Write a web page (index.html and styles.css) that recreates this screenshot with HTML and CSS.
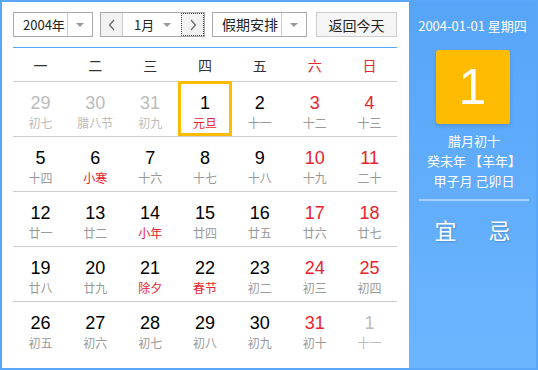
FILE: index.html
```html
<!DOCTYPE html>
<html>
<head>
    <title>万年历</title>
    <link rel="stylesheet" href="styles.css">
</head>
<body>
    <div class="cal">
        <div class="main">
            <div class="bar">
                <div class="sel sel-year">
                    <span class="sel-text">2004年</span>
                    <span class="sel-arrow"><i class="tri"></i></span>
                </div>
                <div class="month-group">
                    <span class="nav">
                        <svg width="8" height="12" viewBox="0 0 8 12"><polyline points="6,1 1.5,6 6,11" fill="none" stroke="#666" stroke-width="1.2"/></svg>
                    </span>
                    <span class="month-text">1月</span>
                    <span class="month-arrow"><i class="tri"></i></span>
                    <span class="nav nav-next">
                        <svg width="8" height="12" viewBox="0 0 8 12"><polyline points="2,1 6.5,6 2,11" fill="none" stroke="#666" stroke-width="1.2"/></svg>
                    </span>
                </div>
                <div class="sel sel-holiday">
                    <span class="sel-text">假期安排</span>
                    <span class="sel-arrow"><i class="tri"></i></span>
                </div>
                <button class="today-btn">返回今天</button>
            </div>

            <div class="week">
                <span>一</span><span>二</span><span>三</span><span>四</span><span>五</span>
                <span class="red">六</span><span class="red">日</span>
            </div>

            <div class="row">
                <div class="day other"><b>29</b><small>初七</small></div>
                <div class="day other"><b>30</b><small>腊八节</small></div>
                <div class="day other"><b>31</b><small>初九</small></div>
                <div class="day current"><b>1</b><small class="fest">元旦</small></div>
                <div class="day"><b>2</b><small>十一</small></div>
                <div class="day weekend"><b>3</b><small>十二</small></div>
                <div class="day weekend"><b>4</b><small>十三</small></div>
            </div>
            <div class="row">
                <div class="day"><b>5</b><small>十四</small></div>
                <div class="day"><b>6</b><small class="fest">小寒</small></div>
                <div class="day"><b>7</b><small>十六</small></div>
                <div class="day"><b>8</b><small>十七</small></div>
                <div class="day"><b>9</b><small>十八</small></div>
                <div class="day weekend"><b>10</b><small>十九</small></div>
                <div class="day weekend"><b>11</b><small>二十</small></div>
            </div>
            <div class="row">
                <div class="day"><b>12</b><small>廿一</small></div>
                <div class="day"><b>13</b><small>廿二</small></div>
                <div class="day"><b>14</b><small class="fest">小年</small></div>
                <div class="day"><b>15</b><small>廿四</small></div>
                <div class="day"><b>16</b><small>廿五</small></div>
                <div class="day weekend"><b>17</b><small>廿六</small></div>
                <div class="day weekend"><b>18</b><small>廿七</small></div>
            </div>
            <div class="row">
                <div class="day"><b>19</b><small>廿八</small></div>
                <div class="day"><b>20</b><small>廿九</small></div>
                <div class="day"><b>21</b><small class="fest">除夕</small></div>
                <div class="day"><b>22</b><small class="fest">春节</small></div>
                <div class="day"><b>23</b><small>初二</small></div>
                <div class="day weekend"><b>24</b><small>初三</small></div>
                <div class="day weekend"><b>25</b><small>初四</small></div>
            </div>
            <div class="row">
                <div class="day"><b>26</b><small>初五</small></div>
                <div class="day"><b>27</b><small>初六</small></div>
                <div class="day"><b>28</b><small>初七</small></div>
                <div class="day"><b>29</b><small>初八</small></div>
                <div class="day"><b>30</b><small>初九</small></div>
                <div class="day weekend"><b>31</b><small>初十</small></div>
                <div class="day other"><b>1</b><small>十一</small></div>
            </div>
        </div>

        <div class="side">
            <div class="side-date">2004-01-01 星期四</div>
            <div class="big-day">1</div>
            <div class="lunar">
                <p>腊月初十</p>
                <p>癸未年 【羊年】</p>
                <p>甲子月 己卯日</p>
            </div>
            <div class="yiji">
                <span>宜</span><span>忌</span>
            </div>
        </div>
    </div>
</body>
</html>
```

FILE: styles.css
```css
body { margin: 0; font-family: "Noto Sans CJK SC", sans-serif; }
.cal { display: flex; width: 534px; height: 366px; border: 2px solid #5aa6f8; background: #5aa6f8; }

/* calendar area */
.main { width: 384px; padding: 10px 12px 0 11px; background: #fff; }
.bar { display: flex; height: 25px; padding-bottom: 10px; border-bottom: 1px solid #5aa6f8; }
.sel { display: flex; box-sizing: border-box; height: 25px; border: 1px solid #aaa; font-size: 13px; color: #222; white-space: nowrap; }
.sel-year { width: 80px; }
.sel-holiday { width: 95px; margin-left: 7px; font-size: 14px; }
.sel-text { flex: 1; padding-left: 9px; line-height: 23px; }
.sel-arrow { width: 24px; flex: none; border-left: 1px solid #ccc; display: flex; align-items: center; justify-content: center; }
.tri { display: block; width: 0; height: 0; border-left: 4px solid transparent; border-right: 4px solid transparent; border-top: 4px solid #999; }

.month-group { display: flex; box-sizing: border-box; width: 105px; height: 25px; margin-left: 7px; border: 1px solid #aaa; font-size: 13px; color: #222; white-space: nowrap; }
.nav { width: 21px; flex: none; display: flex; align-items: center; justify-content: center; background: #f2f2f2; border-right: 1px solid #ccc; }
.nav-next { width: 23px; border: 1px dotted #444; box-sizing: border-box; }
.month-text { flex: 1; padding-left: 11px; line-height: 23px; }
.month-arrow { width: 18px; display: flex; align-items: center; }

.today-btn { width: 81px; height: 25px; margin-left: 9px; padding: 0; border: 1px solid #ccc; background: #f5f5f5; font-family: "Noto Sans CJK SC", sans-serif; font-size: 14px; color: #222; }

.week { display: grid; grid-template-columns: repeat(7, 1fr); height: 33px; line-height: 35px; text-align: center; font-size: 14px; color: #333; }
.red { color: #e8232e; }

.row { display: grid; grid-template-columns: repeat(7, 1fr); height: 54px; border-top: 1px solid #ccc; }
.day { position: relative; display: flex; flex-direction: column; align-items: center; }
.day b { font-family: "Liberation Sans", Arial, sans-serif; font-weight: normal; font-size: 18px; color: #000; margin-top: 10px; line-height: 22px; }
.day small { font-size: 12px; color: #999; line-height: 18px; }
.day.weekend b { color: #e8232e; }
.day small.fest { color: #e8232e; }
.day.other b, .day.other small { color: #bbb; }
.day.current::after { content: ""; position: absolute; top: -1px; left: 0; right: 0; bottom: 0; border: 3px solid #ffbb00; }

/* side panel */
.side { width: 127px; background: linear-gradient(#57a5f8, #6cb5ff); color: #fff; text-align: center; }
.side-date { font-size: 13px; margin-top: 15px; line-height: 18px; }
.big-day { width: 74px; height: 74px; margin: 15px auto 0; background: #ffbb00; border-radius: 3px; box-shadow: 0 2px 4px rgba(0, 0, 0, 0.15); font-family: "Liberation Sans", Arial, sans-serif; font-size: 50px; line-height: 74px; }
.lunar { margin-top: 7px; padding-bottom: 8px; border-bottom: 2px solid rgba(255, 255, 255, 0.45); margin-left: 10px; margin-right: 7px; }
.lunar p { margin: 0; font-size: 13px; line-height: 20px; }
.yiji { display: flex; justify-content: center; gap: 32px; margin-top: 13px; font-size: 22px; line-height: 30px; text-shadow: 1px 1px 2px rgba(0, 0, 0, 0.2); }
```
